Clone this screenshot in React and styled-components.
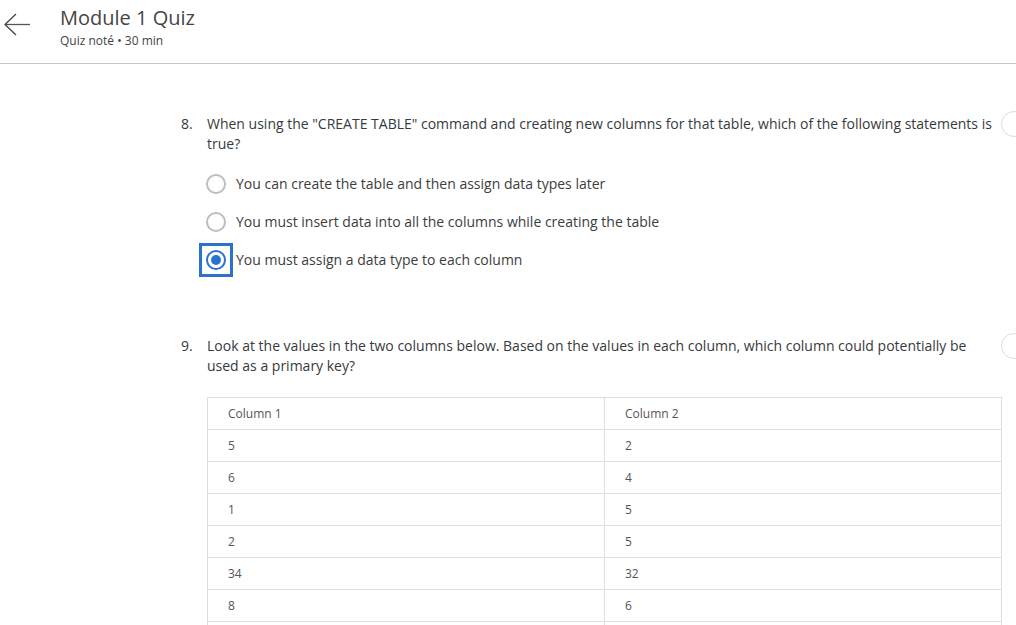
import React from "react";
import styled, { createGlobalStyle } from "styled-components";

const Global = createGlobalStyle`
  html, body { margin: 0; padding: 0; background: #fff; overflow: hidden; }
  body { font-family: "Open Sans", "Noto Sans", sans-serif; color: #373a3c; }
`;

const Page = styled.div`
  width: 1016px;
  height: 625px;
  overflow: hidden;
`;

const Header = styled.header`
  display: flex;
  align-items: flex-start;
  height: 64px;
  border-bottom: 1px solid #c8c8c8;
  box-sizing: border-box;
`;

const BackButton = styled.button`
  width: 36px;
  height: 40px;
  margin: 6px 0 0 3px;
  padding: 0;
  border: none;
  background: none;
  display: flex;
  align-items: center;
  justify-content: flex-start;
`;

const Titles = styled.div`
  margin-left: 21px;
  padding-top: 4px;
  display: flex;
  flex-direction: column;
`;

const Title = styled.h1`
  margin: 0;
  font-size: 20px;
  line-height: 27px;
  font-weight: 400;
  color: #454545;
`;

const Subtitle = styled.div`
  margin-top: 2px;
  font-size: 12px;
  line-height: 16px;
  color: #444;
`;

const Main = styled.main`
  padding: 50px 0 0 181px;
  display: flex;
  flex-direction: column;
`;

const Question = styled.section`
  display: flex;
  flex-direction: column;
  margin-bottom: ${(p) => p.$gap || 0}px;
`;

const Prompt = styled.div`
  display: flex;
  align-items: flex-start;
  font-size: 14px;
  line-height: 20px;
  color: #373a3c;
`;

const Num = styled.span`
  width: 26px;
  flex: none;
`;

const PromptText = styled.p`
  margin: 0;
  width: 794px;
  flex: none;
`;

const Marker = styled.span`
  flex: none;
  width: 26px;
  height: 26px;
  margin: -3px 0 0 0;
  border: 1px solid #dcdcdc;
  border-radius: 50%;
  box-sizing: border-box;
`;

const Options = styled.div`
  display: flex;
  flex-direction: column;
  gap: 18px;
  margin: 20px 0 0 25px;
`;

const Option = styled.label`
  display: flex;
  align-items: center;
  gap: 10px;
  font-size: 14px;
  line-height: 20px;
  color: #3d3d3d;
`;

const RadioFrame = styled.span`
  flex: none;
  display: flex;
  outline: ${(p) => (p.$focused ? "3px solid #2a73cc" : "none")};
  outline-offset: 4px;
`;

const Radio = styled.span`
  position: relative;
  width: 20px;
  height: 20px;
  box-sizing: border-box;
  border-radius: 50%;
  border: 2px solid ${(p) => (p.$checked ? "#2a73cc" : "#bdbdbd")};
  &::after {
    content: "";
    display: ${(p) => (p.$checked ? "block" : "none")};
    position: absolute;
    left: 3px;
    top: 3px;
    width: 10px;
    height: 10px;
    border-radius: 50%;
    background: #2a73cc;
  }
`;

const Table = styled.table`
  margin: 21px 0 0 26px;
  width: 795px;
  border-collapse: collapse;
  font-size: 12px;
  color: #555;
`;

const Cell = styled.td`
  height: 32px;
  padding: 0 0 0 20px;
  border: 1px solid #dedede;
  width: 50%;
  box-sizing: border-box;
  vertical-align: middle;
`;

const Arrow = () => (
  <svg width="28" height="26" viewBox="0 0 28 26" fill="none">
    <path d="M27 11.5H2.5" stroke="#555" strokeWidth="1.3" />
    <path d="M13 1L2 11.5L13 22" stroke="#444" strokeWidth="1.3" />
  </svg>
);

const options = [
  "You can create the table and then assign data types later",
  "You must insert data into all the columns while creating the table",
  "You must assign a data type to each column",
];

const rows = [
  ["5", "2"],
  ["6", "4"],
  ["1", "5"],
  ["2", "5"],
  ["34", "32"],
  ["8", "6"],
  ["", ""],
];

export default function App() {
  const selected = 2;
  return (
    <Page>
      <Global />
      <Header>
        <BackButton aria-label="Back">
          <Arrow />
        </BackButton>
        <Titles>
          <Title>Module 1 Quiz</Title>
          <Subtitle>Quiz noté • 30 min</Subtitle>
        </Titles>
      </Header>
      <Main>
        <Question $gap={66}>
          <Prompt>
            <Num>8.</Num>
            <PromptText>
              When using the "CREATE TABLE" command and creating new columns for that table, which of the following statements is true?
            </PromptText>
            <Marker />
          </Prompt>
          <Options>
            {options.map((o, i) => (
              <Option key={i}>
                <RadioFrame $focused={i === selected}>
                  <Radio $checked={i === selected} />
                </RadioFrame>
                {o}
              </Option>
            ))}
          </Options>
        </Question>
        <Question>
          <Prompt>
            <Num>9.</Num>
            <PromptText>
              Look at the values in the two columns below. Based on the values in each column, which column could potentially be used as a primary key?
            </PromptText>
            <Marker />
          </Prompt>
          <Table>
            <tbody>
              <tr>
                <Cell>Column 1</Cell>
                <Cell>Column 2</Cell>
              </tr>
              {rows.map((r, i) => (
                <tr key={i}>
                  <Cell>{r[0]}</Cell>
                  <Cell>{r[1]}</Cell>
                </tr>
              ))}
            </tbody>
          </Table>
        </Question>
      </Main>
    </Page>
  );
}
